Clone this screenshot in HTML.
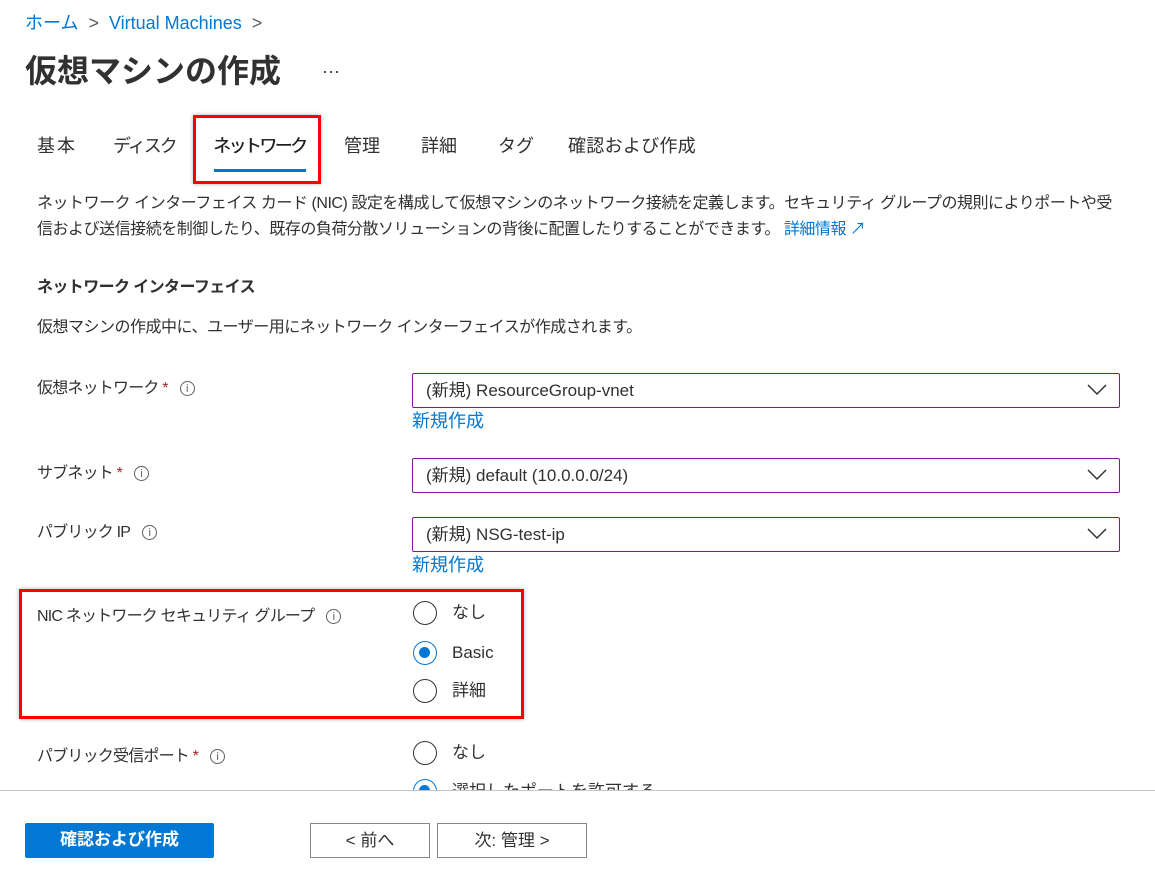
<!DOCTYPE html>
<html><head><meta charset="utf-8"><style>
body{margin:0;width:1155px;height:875px;background:#fff;position:relative;overflow:hidden;font-family:"Liberation Sans","Noto Sans CJK JP",sans-serif;color:#323130}
.a{position:absolute;white-space:nowrap;line-height:1}
.b{color:#0078d4}
.dd{position:absolute;left:412px;font-size:17px;line-height:33px;padding-left:13px;box-sizing:border-box;width:708px;height:35px;border:1px solid #7a1d8f;border-radius:2px}
.dd svg{position:absolute;right:12px;top:10px}
.r{position:absolute;left:413px;width:24px;height:24px;border:1.5px solid #323130;border-radius:50%;box-sizing:border-box}
.r.on{border-color:#0078d4}
.r.on::after{content:"";position:absolute;left:5px;top:5px;width:11px;height:11px;border-radius:50%;background:#0078d4}
.i{display:inline-block;width:15px;height:15px;border:1px solid #605e5c;border-radius:50%;font-size:11px;line-height:15px;text-align:center;color:#605e5c;vertical-align:middle;margin-left:12px;box-sizing:border-box;letter-spacing:0}
.s{color:#a4262c}
.red{position:absolute;border:3px solid #f00;box-shadow:0 0 4px rgba(0,0,0,.3)}
.btn{position:absolute;height:35px;box-sizing:border-box;font-size:17px;line-height:33px;text-align:center}
.l{font-size:16px;letter-spacing:-0.8px}
.t{top:137px;font-size:18px}
</style></head><body>
<div class="a b" style="left:25px;top:14px;font-size:18px">ホーム <span style="color:#605e5c">&nbsp;&gt;&nbsp;</span> Virtual Machines <span style="color:#605e5c">&nbsp;&gt;</span></div>
<div class="a" style="left:25px;top:55px;font-size:32px;font-weight:bold;color:#323130">仮想マシンの作成</div>
<div class="a" style="left:322px;top:62px;font-size:18px">···</div>
<div class="a t" style="left:37px;letter-spacing:2px">基本</div>
<div class="a t" style="left:113px;letter-spacing:-2px">ディスク</div>
<div class="a t" style="left:213px;letter-spacing:-2.6px;color:#201f1e;text-shadow:0.4px 0 0 #201f1e">ネットワーク</div>
<div class="a t" style="left:344px">管理</div>
<div class="a t" style="left:421px">詳細</div>
<div class="a t" style="left:498px">タグ</div>
<div class="a t" style="left:568px;letter-spacing:0.3px">確認および作成</div>
<div style="position:absolute;left:214px;top:169px;width:92px;height:3px;background:#0078d4"></div>
<div class="red" style="left:193px;top:115px;width:122px;height:63px"></div>
<div class="a" style="left:37px;top:196px;font-size:16px;letter-spacing:-0.47px">ネットワーク インターフェイス カード (NIC) 設定を構成して仮想マシンのネットワーク接続を定義します。セキュリティ グループの規則によりポートや受</div>
<div class="a" style="left:37px;top:222px;font-size:16px;letter-spacing:-0.47px">信および送信接続を制御したり、既存の負荷分散ソリューションの背後に配置したりすることができます。 <span class="b">詳細情報 ↗</span></div>
<div class="a" style="left:37px;top:280px;font-size:16px;font-weight:bold;letter-spacing:-0.6px">ネットワーク インターフェイス</div>
<div class="a" style="left:37px;top:320px;font-size:16px;letter-spacing:-0.5px">仮想マシンの作成中に、ユーザー用にネットワーク インターフェイスが作成されます。</div>
<div class="a l" style="left:37px;top:381px">仮想ネットワーク <span class="s">*</span><span class="i">i</span></div>
<div class="a l" style="left:37px;top:466px">サブネット <span class="s">*</span><span class="i">i</span></div>
<div class="a l" style="left:37px;top:525px">パブリック IP<span class="i">i</span></div>
<div class="a l" style="left:37px;top:609px">NIC ネットワーク セキュリティ グループ<span class="i">i</span></div>
<div class="a l" style="left:37px;top:749px">パブリック受信ポート <span class="s">*</span><span class="i">i</span></div>
<div class="dd" style="top:373px">(新規) ResourceGroup-vnet<svg width="20" height="12"><path d="M1 1L10 10L19 1" fill="none" stroke="#323130" stroke-width="1.5"/></svg></div>
<div class="a b" style="left:412px;top:412px;font-size:18px">新規作成</div>
<div class="dd" style="top:458px">(新規) default (10.0.0.0/24)<svg width="20" height="12"><path d="M1 1L10 10L19 1" fill="none" stroke="#323130" stroke-width="1.5"/></svg></div>
<div class="dd" style="top:517px">(新規) NSG-test-ip<svg width="20" height="12"><path d="M1 1L10 10L19 1" fill="none" stroke="#323130" stroke-width="1.5"/></svg></div>
<div class="a b" style="left:412px;top:556px;font-size:18px">新規作成</div>
<div class="r" style="top:601px"></div><div class="a" style="left:452px;top:604px;font-size:17px">なし</div>
<div class="r on" style="top:641px"></div><div class="a" style="left:452px;top:644px;font-size:17px">Basic</div>
<div class="r" style="top:679px"></div><div class="a" style="left:452px;top:682px;font-size:17px">詳細</div>
<div class="red" style="left:19px;top:589px;width:499px;height:124px"></div>
<div class="r" style="top:741px"></div><div class="a" style="left:452px;top:744px;font-size:17px">なし</div>
<div style="position:absolute;left:0;top:779px;width:700px;height:11px;overflow:hidden"><div class="r on" style="top:0"></div><div class="a" style="left:452px;top:4px;font-size:17px">選択したポートを許可する</div></div>
<div style="position:absolute;left:0;top:790px;width:1155px;height:1px;background:#c8c6c4"></div>
<div class="btn" style="left:25px;top:823px;width:189px;background:#0078d4;color:#fff;font-weight:bold;border-radius:2px">確認および作成</div>
<div class="btn" style="left:310px;top:823px;width:120px;border:1px solid #8a8886">&lt; 前へ</div>
<div class="btn" style="left:437px;top:823px;width:150px;border:1px solid #8a8886">次: 管理 &gt;</div>
</body></html>
